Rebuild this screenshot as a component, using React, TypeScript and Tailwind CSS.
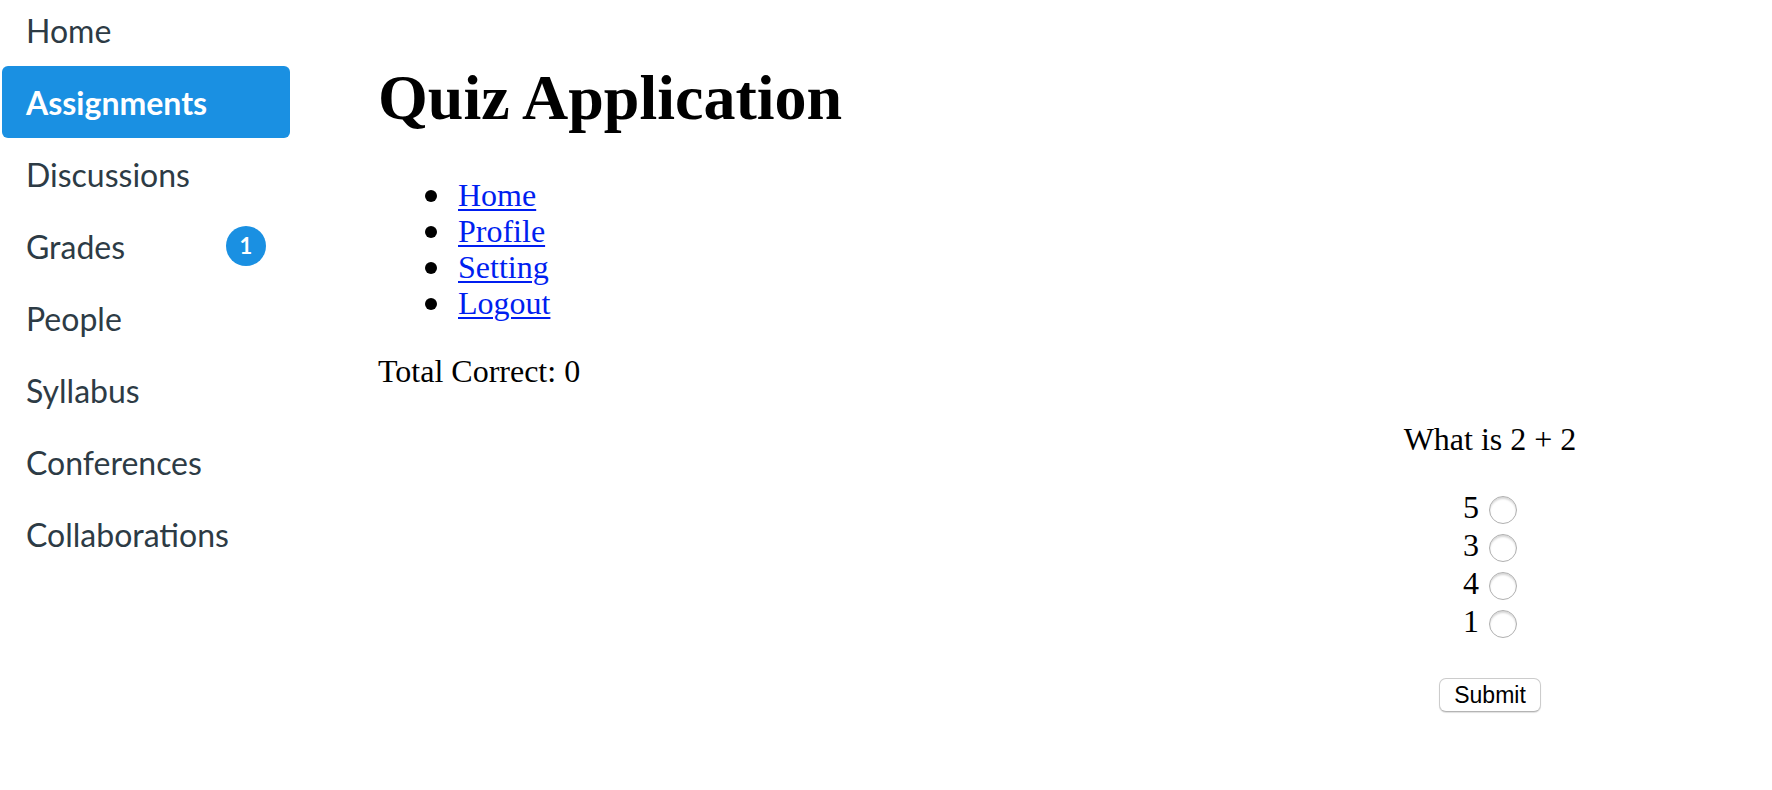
const navItems: { label: string; active?: boolean; badge?: number }[] = [
  { label: "Home" },
  { label: "Assignments", active: true },
  { label: "Discussions" },
  { label: "Grades", badge: 1 },
  { label: "People" },
  { label: "Syllabus" },
  { label: "Conferences" },
  { label: "Collaborations" },
];

const links = ["Home", "Profile", "Setting", "Logout"];
const choices = ["5", "3", "4", "1"];

export default function App() {
  return (
    <div className="flex min-h-screen items-start bg-white">
      <nav
        aria-label="Course"
        className="flex w-[290px] shrink-0 flex-col pl-0.5 font-['Lato',sans-serif] text-[32px] leading-9 text-[#2d3b45]"
      >
        {navItems.map((item) => (
          <a
            key={item.label}
            href="#"
            className={
              item.active
                ? "flex h-[72px] items-center rounded-md bg-[#1a90e2] px-6 font-bold text-white"
                : "flex h-[72px] items-center justify-between px-6 first:-mt-1.5"
            }
          >
            <span className="pt-0.5">{item.label}</span>
            {item.badge && (
              <span className="flex size-10 items-center justify-center rounded-full bg-[#1a90e2] text-[22px] font-bold text-white">
                {item.badge}
              </span>
            )}
          </a>
        ))}
      </nav>

      <main className="ml-[88px] flex-1 pt-[61px] font-['Liberation_Serif',serif] text-[32px] leading-9 text-black">
        <h1 className="text-[64px] leading-[74px] font-bold">Quiz Application</h1>
        <ul className="mt-[42px] pl-[47px]">
          {links.map((link) => (
            <li
              key={link}
              className="flex items-center gap-[21px] before:mt-0.5 before:size-3 before:rounded-full before:bg-black"
            >
              <a href="#" className="text-[#001ef0] underline decoration-2 underline-offset-3">
                {link}
              </a>
            </li>
          ))}
        </ul>
        <p className="mt-8">Total Correct: 0</p>

        <form
          className="mt-8 ml-auto flex w-[564px] flex-col items-center"
          onSubmit={(event) => event.preventDefault()}
        >
          <fieldset className="flex flex-col items-center">
            <legend className="mb-8 text-center">What is 2 + 2</legend>
            {choices.map((choice) => (
              <label key={choice} className="flex h-[38px] items-start gap-2.5">
                {choice}
                <input
                  type="radio"
                  name="answer"
                  value={choice}
                  className="mt-[7px] size-7 appearance-none rounded-full border border-[#b0b0b0] bg-white shadow-[inset_0_2px_2px_#d8d8d8] checked:border-8 checked:border-[#1a90e2]"
                />
              </label>
            ))}
          </fieldset>
          <button
            type="submit"
            className="mt-[37px] h-[34px] rounded-[7px] border border-[#cccccc] border-b-[#b4b4b4] bg-white px-3.5 font-['Liberation_Sans',sans-serif] text-[23px] leading-8 shadow-[0_1px_1px_#e0e0e0]"
          >
            Submit
          </button>
        </form>
      </main>
    </div>
  );
}
